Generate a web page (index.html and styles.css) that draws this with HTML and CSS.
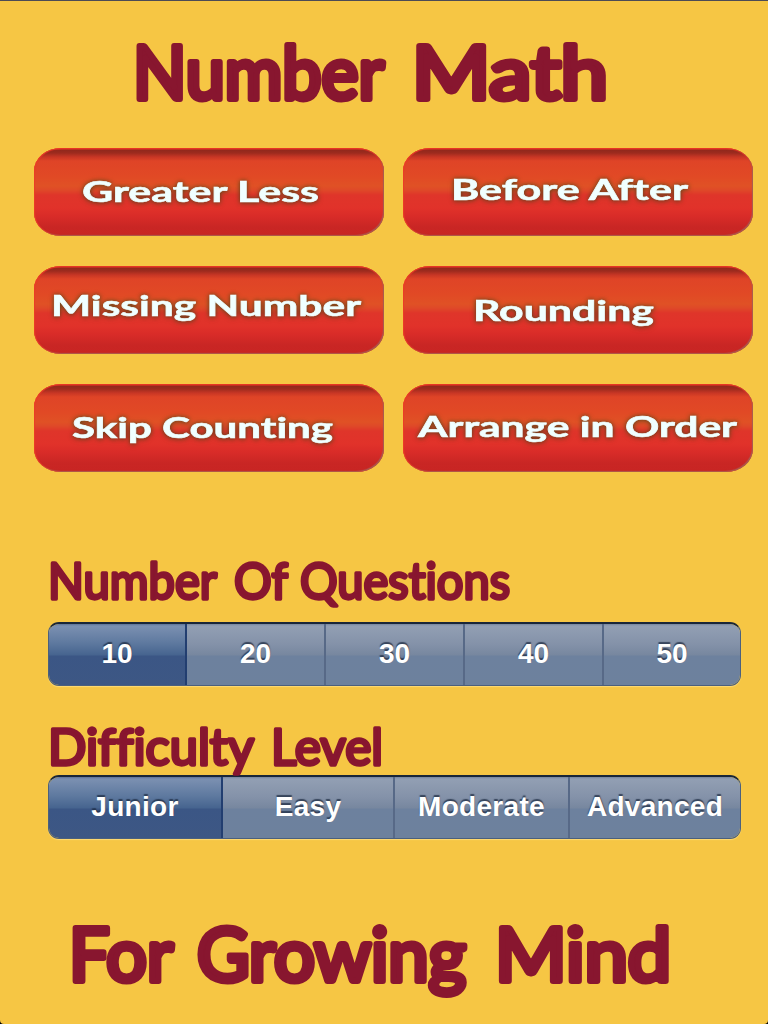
FILE: index.html
```html
<!DOCTYPE html>
<html lang="en">
<head>
<meta charset="utf-8">
<title>Number Math</title>
<link rel="stylesheet" href="styles.css">
</head>
<body>
<main class="screen">
  <h1 class="title"><svg class="lettering large" width="768" height="90" viewBox="0 0 768 90">
    <text x="133" y="74" textLength="251" lengthAdjust="spacingAndGlyphs">Number</text>
    <text x="412" y="74" textLength="196" lengthAdjust="spacingAndGlyphs">Math</text>
  </svg></h1>
  <nav class="games">
    <button class="game"><svg width="350" height="88"><text x="48" y="54" textLength="237" lengthAdjust="spacingAndGlyphs">Greater Less</text></svg></button>
    <button class="game"><svg width="350" height="88"><text x="48" y="52" textLength="237" lengthAdjust="spacingAndGlyphs">Before After</text></svg></button>
    <button class="game"><svg width="350" height="88"><text x="17" y="50" textLength="310" lengthAdjust="spacingAndGlyphs">Missing Number</text></svg></button>
    <button class="game"><svg width="350" height="88"><text x="70" y="55" textLength="181" lengthAdjust="spacingAndGlyphs">Rounding</text></svg></button>
    <button class="game"><svg width="350" height="88"><text x="38" y="54" textLength="261" lengthAdjust="spacingAndGlyphs">Skip Counting</text></svg></button>
    <button class="game"><svg width="350" height="88"><text x="15" y="53" textLength="319" lengthAdjust="spacingAndGlyphs">Arrange in Order</text></svg></button>
  </nav>
  <section class="setting questions">
    <h2 class="label"><svg class="lettering small" width="720" height="73" viewBox="0 0 720 73">
      <text x="48" y="50" textLength="169" lengthAdjust="spacingAndGlyphs">Number</text>
      <text x="234" y="50" textLength="54" lengthAdjust="spacingAndGlyphs">Of</text>
      <text x="300" y="50" textLength="210" lengthAdjust="spacingAndGlyphs">Questions</text>
    </svg></h2>
    <div class="segments five">
      <button class="segment selected">10</button><button class="segment">20</button><button class="segment">30</button><button class="segment">40</button><button class="segment">50</button>
    </div>
  </section>
  <section class="setting difficulty">
    <h2 class="label"><svg class="lettering small" width="720" height="64" viewBox="0 0 720 64">
      <text x="48" y="54" textLength="206" lengthAdjust="spacingAndGlyphs">Difficulty</text>
      <text x="271" y="54" textLength="112" lengthAdjust="spacingAndGlyphs">Level</text>
    </svg></h2>
    <div class="segments four">
      <button class="segment selected">Junior</button><button class="segment">Easy</button><button class="segment">Moderate</button><button class="segment">Advanced</button>
    </div>
  </section>
  <footer class="tagline"><svg class="lettering large" width="768" height="100" viewBox="0 0 768 100">
    <text x="69" y="69" textLength="104" lengthAdjust="spacingAndGlyphs">For</text>
    <text x="197" y="69" textLength="269" lengthAdjust="spacingAndGlyphs">Growing</text>
    <text x="495" y="69" textLength="176" lengthAdjust="spacingAndGlyphs">Mind</text>
  </svg></footer>
</main>
</body>
</html>
```
FILE: styles.css
```css
* { box-sizing: border-box; }
html { background: #000; }
body { margin: 0; font-family: "Liberation Sans", Arial, sans-serif; }
button { appearance: none; border: 0; margin: 0; padding: 0; font: inherit; }
svg { display: block; font-variant-ligatures: none; }
.screen {
  width: 768px; height: 1024px; overflow: hidden;
  border-top: 1px solid #4c4b55;
  border-radius: 0 0 4px 4px;
  background: #f6c644;
}
.title { margin: 0; padding-top: 24px; height: 147px; }
.lettering { font-family: Lato, sans-serif; font-weight: 400; fill: #88162f; stroke: #88162f; stroke-linejoin: round; overflow: visible; }
.large { font-size: 73px; stroke-width: 6px; }
.small { font-size: 50px; stroke-width: 3.4px; }
.games {
  display: grid; grid-template-columns: 350px 350px; grid-auto-rows: 88px;
  gap: 30px 19px; padding-left: 34px;
}
.game {
  overflow: hidden; border-radius: 27px / 23px;
  background: linear-gradient(#e63524 0, #e63524 1px, #91281c 2px, #9d2b1e 5px, #c83625 9px, #df4427 13px, #e14925 28px, #e05125 38px, #df4928 42px, #df352a 47px, #e1322a 60px, #d82b28 69px, #c92624 79px, #c82523 87px, #e63524 88px);
  box-shadow: inset 1px 0 1px #ec3c27, inset -1px -1px 1px #a65f52, inset 0 1px 1px #e73626;
}
.game svg {
  font-family: Lato, sans-serif; font-size: 29px; font-weight: 700;
  fill: #f0ffff; stroke: #f0ffff; stroke-width: .6px;
  filter: drop-shadow(0 0 2px rgba(75, 70, 20, .7)) drop-shadow(0 1px 2px rgba(75, 60, 30, .4));
}
.label { margin: 0; }
.questions { padding-top: 77px; height: 239px; }
.difficulty { height: 201px; }
.segments {
  display: grid; margin-left: 48px; width: 693px; height: 64px;
  overflow: hidden; border: 1px solid #4b607d; border-top: 2px solid #192638;
  border-radius: 11px;
  box-shadow: 0 1px 1px #ffda75;
}
.five { grid-template-columns: 138px repeat(3, 139px) 1fr; }
.four { grid-template-columns: 174px 172px 175px 1fr; }
.segment {
  border-right: 2px solid #576987; color: #fff;
  font-size: 28px; font-weight: 700; line-height: 60px; padding-bottom: 1px;
  text-shadow: 0 -2px 1px rgba(30, 43, 65, .75);
  background: linear-gradient(#76859d 0, #929fb3 2px, #8492a9 20px, #77879f 31px, #6d819e 32px, #6d819d 100%);
}
.segment:last-child { border-right: 0; }
.segment.selected {
  border-right-color: #223e70;
  background: linear-gradient(#5d7296 0, #7b90b1 2px, #5e799f 19px, #46648f 31px, #3b5685 32px, #3d5784 100%);
}
.difficulty .segment { letter-spacing: .3px; }
.tagline { height: 100px; }
```
